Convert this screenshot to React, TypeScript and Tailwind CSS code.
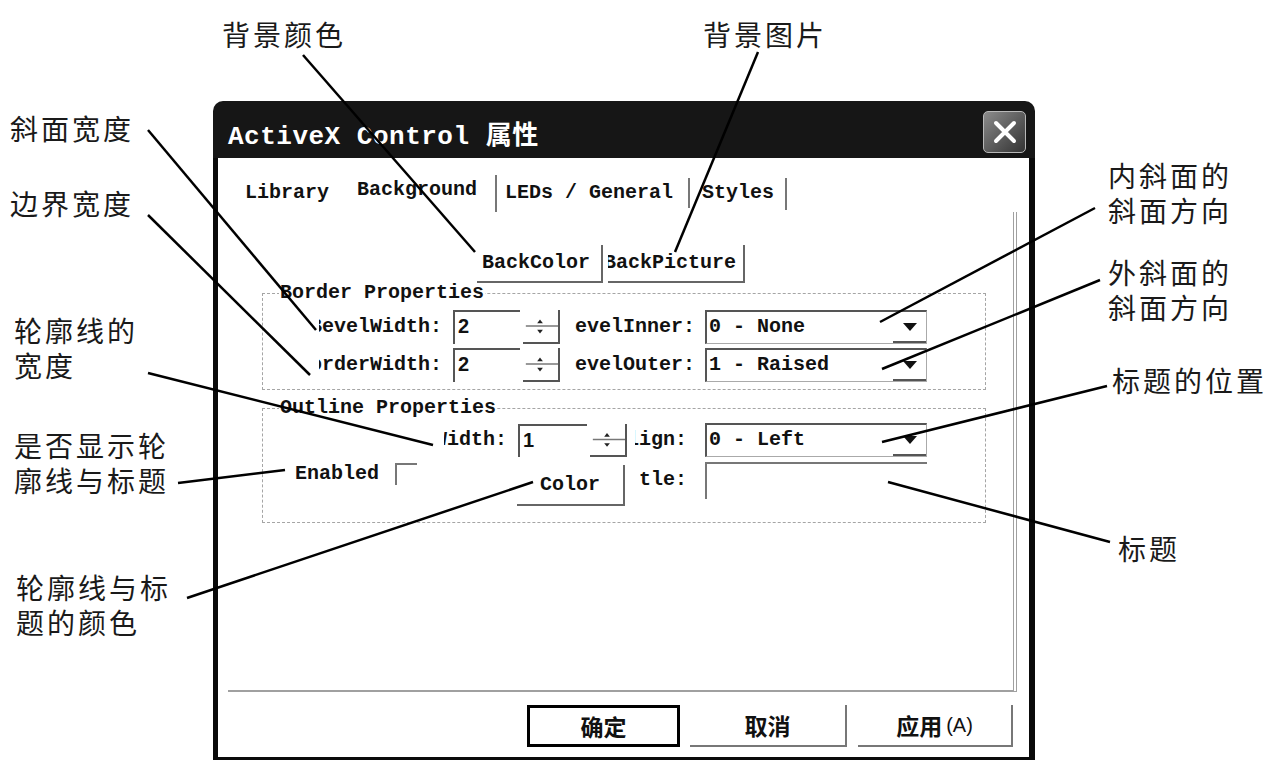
import React from 'react'

const MONO = "font-['Liberation_Mono',monospace]"
const CJK = "font-['Noto_Sans_CJK_SC',sans-serif]"

function ClipLabel({ text, className }: { text: string; className: string }) {
  return (
    <div className={`flex justify-end overflow-hidden whitespace-nowrap leading-[24px] ${className}`}>
      <span className="shrink-0">{text}</span>
    </div>
  )
}

function Spinner({ className }: { className: string }) {
  return (
    <div className={`border-r-2 border-b-2 border-[#555] ${className}`}>
      <svg viewBox="0 0 37 34" className="w-full h-full" preserveAspectRatio="none">
        <polygon points="15,14 21,14 18,10" fill="#222" />
        <line x1="3" y1="17" x2="37" y2="17" stroke="#777" strokeWidth="1.5" />
        <polygon points="15,21 21,21 18,25" fill="#222" />
      </svg>
    </div>
  )
}

function NumBox({ value, className }: { value: string; className: string }) {
  return (
    <div
      className={`border-t-2 border-l-2 border-[#555] pl-[3px] font-['Liberation_Sans',sans-serif] text-[20px] leading-[28px] ${className}`}
    >
      {value}
    </div>
  )
}

function Combo({ value, className }: { value: string; className: string }) {
  return (
    <div
      className={`w-[222px] flex border-t-2 border-l-2 border-r border-b border-t-[#555] border-l-[#555] border-r-[#aaa] border-b-[#aaa] ${className}`}
    >
      <span className="flex-1 pl-[2px] leading-[30px] whitespace-nowrap">{value}</span>
      <div className="w-[33px] h-full border-b-2 border-[#555] flex items-center justify-center">
        <svg width="14" height="8" viewBox="0 0 14 8">
          <polygon points="0,0 14,0 7,8" fill="#111" />
        </svg>
      </div>
    </div>
  )
}

function Dialog() {
  return (
    <div className={`w-[822px] ${MONO} font-bold text-[20px] text-[#111]`}>
      {/* Title bar */}
      <div className="h-[57px] rounded-t-[10px] bg-[#161616] flex items-start pl-[15px] pr-[9px]">
        <div className="mt-[19px] text-white text-[26px] leading-[26px] tracking-[0.5px] whitespace-nowrap">
          ActiveX Control <span className={CJK}>属性</span>
        </div>
        <div className="ml-auto mt-[10px] w-[43px] h-[42px] rounded-[5px] border border-[#b8b8b8] bg-linear-to-br from-[#8c8c8c] to-[#343434] flex items-center justify-center">
          <svg width="26" height="26" viewBox="0 0 26 26">
            <path d="M4 4 L22 22 M22 4 L4 22" stroke="#fff" strokeWidth="4" strokeLinecap="round" />
          </svg>
        </div>
      </div>

      {/* Body */}
      <div className="h-[602px] bg-white border-l-[5px] border-r-[6px] border-b-[3px] border-[#0a0a0a]">
        {/* Tabs */}
        <div className="h-[54px] flex items-start leading-[24px] whitespace-nowrap">
          <span className="ml-[27px] mt-[23px]">Library</span>
          <span className="ml-[28px] mt-[20px]">Background</span>
          <div className="ml-[18px] mt-[17px] w-[2px] h-[37px] bg-[#777]" />
          <span className="ml-[8px] mt-[23px]">LEDs / General</span>
          <div className="ml-[15px] mt-[20px] w-[2px] h-[30px] bg-[#777]" />
          <span className="ml-[12px] mt-[23px]">Styles</span>
          <div className="ml-[11px] mt-[20px] w-[2px] h-[32px] bg-[#777]" />
        </div>

        {/* Panel */}
        <div className="ml-[10px] w-[789px] h-[480px] border-r-[4px] border-b-[2px] border-double border-[#a0a0a0]">
          <div className="ml-[249px] pt-[33px] flex">
            <div className="w-[126px] h-[38px] border-r-2 border-b-2 border-[#666] pl-[5px] leading-[36px]">
              BackColor
            </div>
            <div className="ml-[5px] w-[137px] h-[38px] border-r-2 border-b-2 border-[#666] overflow-hidden flex leading-[36px] whitespace-nowrap">
              <span className="shrink-0 -ml-[4px]">BackPicture</span>
            </div>
          </div>

          <fieldset className="ml-[34px] w-[724px] h-[107px] border border-dashed border-[#a5a5a5]">
            <legend className="ml-[16px] px-[1px] leading-[20px]">Border Properties</legend>
            <div className="mt-[7px] h-[34px] flex items-center">
              <ClipLabel text="BevelWidth:" className="ml-[56px] w-[123px]" />
              <NumBox value="2" className="ml-[11px] w-[67px] h-[34px]" />
              <Spinner className="ml-[3px] w-[37px] h-[34px]" />
              <ClipLabel text="BevelInner:" className="ml-[15px] w-[120px]" />
              <Combo value="0 - None" className="ml-[10px] h-[34px]" />
            </div>
            <div className="mt-[4px] h-[34px] flex items-center">
              <ClipLabel text="BorderWidth:" className="ml-[56px] w-[123px]" />
              <NumBox value="2" className="ml-[11px] w-[67px] h-[34px]" />
              <Spinner className="ml-[3px] w-[37px] h-[34px]" />
              <ClipLabel text="BevelOuter:" className="ml-[15px] w-[120px]" />
              <Combo value="1 - Raised" className="ml-[10px] h-[34px]" />
            </div>
          </fieldset>

          <fieldset className="ml-[34px] mt-[8px] w-[724px] h-[125px] border border-dashed border-[#a5a5a5]">
            <legend className="ml-[16px] px-[1px] leading-[20px]">Outline Properties</legend>
            <div className="mt-[4px] h-[36px] flex items-center">
              <ClipLabel text="Width:" className="ml-[181px] w-[63px]" />
              <NumBox value="1" className="ml-[11px] w-[69px] h-[33px]" />
              <Spinner className="ml-[3px] w-[37px] h-[33px]" />
              <ClipLabel text="Align:" className="ml-[8px] w-[52px]" />
              <Combo value="0 - Left" className="ml-[18px] h-[34px]" />
            </div>
            <div className="mt-[4px] h-[44px] flex items-start">
              <span className="ml-[32px] leading-[24px]">Enabled</span>
              <div className="ml-[16px] mt-[1px] w-[22px] h-[22px] border-t-2 border-l-2 border-[#777]" />
              <div className="ml-[100px] mt-[3px] w-[108px] h-[41px] border-r-2 border-b-2 border-[#666] flex items-center justify-center">
                Color
              </div>
              <ClipLabel text="Title:" className="ml-[15px] mt-[6px] w-[47px]" />
              <div className="ml-[18px] w-[222px] h-[37px] border-t-2 border-l-2 border-[#777]" />
            </div>
          </fieldset>
        </div>

        {/* Buttons */}
        <div className={`ml-[309px] mt-[13px] flex ${CJK} text-[23px]`}>
          <div className="w-[153px] h-[42px] border-[3px] border-black flex items-center justify-center">
            确定
          </div>
          <div className="ml-[10px] w-[157px] h-[42px] border-r-2 border-b-2 border-[#777] flex items-center justify-center">
            取消
          </div>
          <div className="ml-[11px] w-[155px] h-[42px] border-r-2 border-b-2 border-[#777] flex items-center justify-center">
            应用<span className="font-['Liberation_Sans',sans-serif] font-normal text-[20px] ml-[4px]">(A)</span>
          </div>
        </div>
      </div>
    </div>
  )
}

const lines: [number, number, number, number][] = [
  [303, 55, 475, 252],
  [758, 52, 675, 252],
  [148, 130, 316, 330],
  [148, 215, 310, 375],
  [148, 373, 433, 445],
  [178, 483, 285, 470],
  [187, 598, 533, 482],
  [1095, 208, 880, 322],
  [1100, 280, 882, 369],
  [1107, 386, 882, 442],
  [1110, 542, 888, 482],
]

const notes: { text: string[]; left: number; top: number }[] = [
  { text: ['背景颜色'], left: 222, top: 17 },
  { text: ['背景图片'], left: 703, top: 17 },
  { text: ['斜面宽度'], left: 10, top: 111 },
  { text: ['边界宽度'], left: 10, top: 186 },
  { text: ['轮廓线的', '宽度'], left: 14, top: 313 },
  { text: ['是否显示轮', '廓线与标题'], left: 14, top: 428 },
  { text: ['轮廓线与标', '题的颜色'], left: 16, top: 570 },
  { text: ['内斜面的', '斜面方向'], left: 1108, top: 158 },
  { text: ['外斜面的', '斜面方向'], left: 1108, top: 255 },
  { text: ['标题的位置'], left: 1112, top: 363 },
  { text: ['标题'], left: 1118, top: 531 },
]

function Callouts() {
  return (
    <>
      <svg className="absolute inset-0 pointer-events-none" width="1272" height="761">
        {lines.map(([x1, y1, x2, y2], i) => (
          <line key={i} x1={x1} y1={y1} x2={x2} y2={y2} stroke="#000" strokeWidth="2.5" />
        ))}
      </svg>
      {notes.map((n, i) => (
        <div
          key={i}
          className={`absolute ${CJK} text-[28px] leading-[35px] tracking-[3px] text-[#1a1a1a] whitespace-nowrap`}
          style={{ left: n.left, top: n.top }}
        >
          {n.text.map((t) => (
            <div key={t}>{t}</div>
          ))}
        </div>
      ))}
    </>
  )
}

export default function App() {
  return (
    <div className="relative w-[1272px] h-[761px] bg-white overflow-hidden">
      <div className="pl-[213px] pt-[101px]">
        <Dialog />
      </div>
      <Callouts />
    </div>
  )
}
